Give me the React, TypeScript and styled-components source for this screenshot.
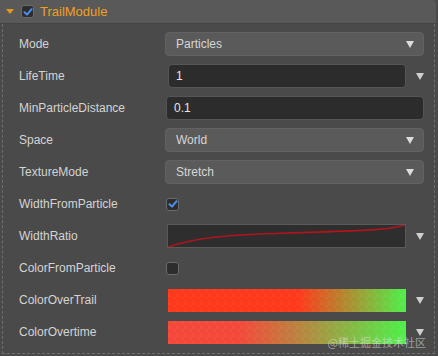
import React from "react";
import styled, { createGlobalStyle } from "styled-components";

const GlobalStyle = createGlobalStyle`
  html, body {
    margin: 0;
    padding: 0;
    background: #4a4a4a;
    font-family: "Liberation Sans", Arial, sans-serif;
  }
`;

const Panel = styled.div`
  position: relative;
  width: 436px;
  height: 356px;
  box-sizing: border-box;
  background: #4a4a4a;
`;

const Header = styled.div`
  height: 24px;
  display: flex;
  align-items: center;
  padding-left: 6px;
  gap: 6px;
  background: #595959;
  border-radius: 0 4px 0 0;
  border-bottom: 1px solid #444;
  box-sizing: border-box;
`;

const Caret = styled.span`
  width: 0;
  height: 0;
  border-left: 4px solid transparent;
  border-right: 4px solid transparent;
  border-top: 5px solid #e8961e;
`;

const Title = styled.span`
  color: #f0a020;
  font-size: 13px;
`;

const Body = styled.div`
  margin: 0 0 0 2px;
  width: 433px;
  height: 330px;
  box-sizing: border-box;
  border: 1px dashed #6e6e6e;
  border-top: none;
  padding: 4px 10px 0 16px;
`;

const Row = styled.div`
  height: 32px;
  display: flex;
  align-items: center;
`;

const Label = styled.div`
  width: 146px;
  flex-shrink: 0;
  color: #d4d4d4;
  font-size: 12px;
`;

const Control = styled.div`
  flex: 1;
  display: flex;
  align-items: center;
  height: 100%;
`;

const Select = styled.div`
  flex: 1;
  height: 24px;
  box-sizing: border-box;
  background: #5a5a5a;
  border: 1px solid #626262;
  border-radius: 4px;
  display: flex;
  align-items: center;
  justify-content: space-between;
  padding: 0 9px 0 10px;
  color: #d6d6d6;
  font-size: 12px;
`;

const Arrow = styled.span<{ $color?: string }>`
  width: 0;
  height: 0;
  border-left: 4px solid transparent;
  border-right: 4px solid transparent;
  border-top: 7px solid ${(p) => p.$color ?? "#dcdcdc"};
`;

const Input = styled.div<{ $inset?: boolean }>`
  flex: 1;
  height: 24px;
  box-sizing: border-box;
  margin-left: ${(p) => (p.$inset ? "3px" : "1px")};
  background: #2c2c2c;
  border: 1px solid #555;
  border-radius: 4px;
  display: flex;
  align-items: center;
  padding-left: 7px;
  color: #e6e6e6;
  font-size: 12px;
`;

const SideArrow = styled.div`
  width: 18px;
  display: flex;
  justify-content: flex-end;
`;

const Check = styled.div`
  width: 13px;
  height: 13px;
  box-sizing: border-box;
  margin-left: 1px;
  background: #2d2d2d;
  border: 1px solid #6a6a6a;
  border-radius: 3px;
  display: flex;
  align-items: center;
  justify-content: center;
`;

const Curve = styled.div`
  flex: 1;
  height: 24px;
  margin-left: 2px;
  box-sizing: border-box;
  background: #2e2e2e;
  border: 1px solid #5a5a5a;
  svg {
    display: block;
  }
`;

const ColorBar = styled.div<{ $from: string; $stop: string }>`
  flex: 1;
  height: 23px;
  margin-left: 3px;
  box-sizing: border-box;
  background:
    linear-gradient(
      45deg,
      rgba(255, 255, 255, 0.04) 25%,
      transparent 25%,
      transparent 75%,
      rgba(255, 255, 255, 0.04) 75%
    ) 0 0 / 8px 8px,
    linear-gradient(90deg, ${(p) => p.$from} 0%, ${(p) => p.$from} ${(p) => p.$stop}, #4ef04a 100%);
`;

const Mark = styled.div`
  position: absolute;
  right: 10px;
  bottom: 6px;
  color: rgba(230, 230, 230, 0.55);
  font-size: 11px;
  font-family: "Noto Sans CJK SC", "Liberation Sans", sans-serif;
`;

const Tick = ({ size = 10 }: { size?: number }) => (
  <svg width={size} height={size} viewBox="0 0 10 10">
    <path d="M1.5 5.2 L4 7.6 L8.6 2.2" fill="none" stroke="#4b8ff0" strokeWidth="2" strokeLinecap="round" strokeLinejoin="round" />
  </svg>
);

const rows: { label: string; kind: string; value?: string }[] = [
  { label: "Mode", kind: "select", value: "Particles" },
  { label: "LifeTime", kind: "number", value: "1" },
  { label: "MinParticleDistance", kind: "input", value: "0.1" },
  { label: "Space", kind: "select", value: "World" },
  { label: "TextureMode", kind: "select", value: "Stretch" },
  { label: "WidthFromParticle", kind: "check", value: "on" },
  { label: "WidthRatio", kind: "curve" },
  { label: "ColorFromParticle", kind: "check" },
  { label: "ColorOverTrail", kind: "color", value: "#ff3a1c|55%" },
  { label: "ColorOvertime", kind: "color", value: "#f4493a|30%" },
];

const renderControl = (r: { kind: string; value?: string }) => {
  switch (r.kind) {
    case "select":
      return (
        <Select>
          {r.value}
          <Arrow />
        </Select>
      );
    case "number":
      return (
        <>
          <Input $inset>{r.value}</Input>
          <SideArrow>
            <Arrow $color="#cfcfcf" />
          </SideArrow>
        </>
      );
    case "input":
      return <Input>{r.value}</Input>;
    case "check":
      return <Check>{r.value && <Tick />}</Check>;
    case "curve":
      return (
        <>
          <Curve>
            <svg width="100%" height="22" viewBox="0 0 238 22" preserveAspectRatio="none">
              <path d="M0 22 C 30 12, 60 10, 120 8 S 220 6, 238 0" fill="none" stroke="#b0151c" strokeWidth="1.6" />
            </svg>
          </Curve>
          <SideArrow>
            <Arrow $color="#cfcfcf" />
          </SideArrow>
        </>
      );
    case "color": {
      const [from, stop] = (r.value ?? "").split("|");
      return (
        <>
          <ColorBar $from={from} $stop={stop} />
          <SideArrow>
            <Arrow $color="#cfcfcf" />
          </SideArrow>
        </>
      );
    }
  }
  return null;
};

export default function App() {
  return (
    <>
      <GlobalStyle />
      <Panel>
        <Header>
          <Caret />
          <Check>
            <Tick />
          </Check>
          <Title>TrailModule</Title>
        </Header>
        <Body>
          {rows.map((r) => (
            <Row key={r.label}>
              <Label>{r.label}</Label>
              <Control>{renderControl(r)}</Control>
            </Row>
          ))}
        </Body>
        <Mark>@稀土掘金技术社区</Mark>
      </Panel>
    </>
  );
}
